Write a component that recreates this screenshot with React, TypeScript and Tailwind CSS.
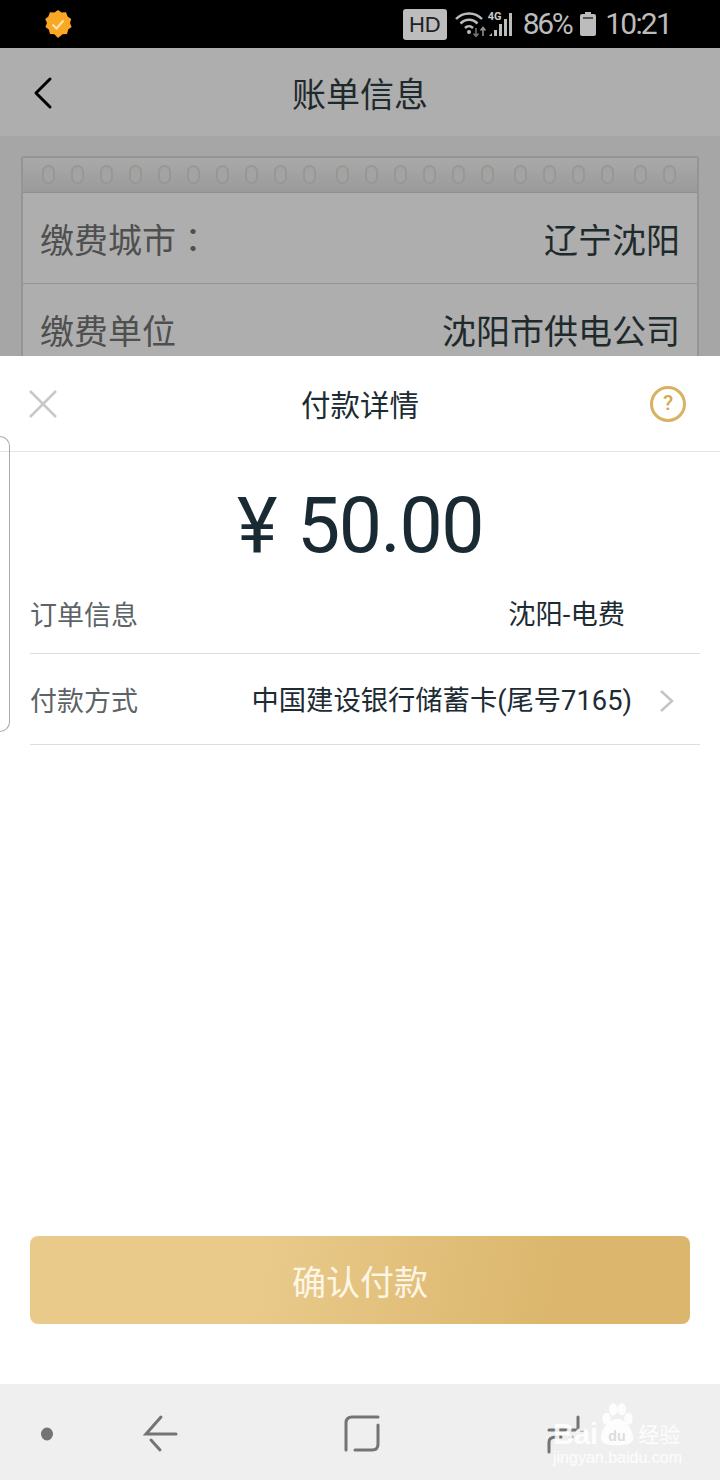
const DOT_GROUPS = [10, 6, 4, 2];

function RingDots() {
  return (
    <div className="flex h-[35px] items-center gap-[20px] border-b border-[#8f8f8f] bg-gradient-to-b from-[#a9a9a9] to-[#9a9a9a] pb-[2px] pl-[19px]">
      {DOT_GROUPS.map((count, g) => (
        <div key={g} className="flex gap-[16px]">
          {Array.from({ length: count }).map((_, i) => (
            <span key={i} className="h-[19px] w-[13px] rounded-full border-2 border-[#979795] bg-[#a3a3a1]" />
          ))}
        </div>
      ))}
    </div>
  );
}

function StatusBar() {
  return (
    <div className="flex h-12 items-center bg-black pl-[44px] pr-[49px] font-['Roboto',sans-serif] text-[#bcbcbc]">
      <svg width="28" height="28" viewBox="0 0 28 28">
        <path
          d="M14 0l3.6 2.6 4.4-.4 1.6 4.2 3.6 2.6L26 13l1.6 4-3.4 2.6-1.2 4.4-4.4.2L14 28l-3.6-3.8-4.4-.2-1.2-4.4L1.4 17 3 13 1.2 9l3.2-2.6L6 2.2l4.4.4z"
          fill="#f9a825"
        />
        <path d="M8.5 14.5l4 4 7-8" fill="none" stroke="#fde7b0" strokeWidth="2" />
      </svg>
      <div className="ml-auto flex items-center">
        <span className="flex h-[31px] w-[44px] items-center justify-center rounded-[3px] bg-[#bdbdbd] font-['Liberation_Sans',sans-serif] text-[22px] text-[#222]">
          HD
        </span>
        <svg className="ml-[8px]" width="34" height="26" viewBox="0 0 34 26" fill="none" stroke="#bcbcbc">
          <path d="M1 8c7-7.500 19-7.500 26 0" strokeWidth="2.500" />
          <path d="M5.500 12.500c5-5 12-5 17 0" strokeWidth="2.500" />
          <path d="M10 17c2.500-2.500 5.500-2.500 8 0" strokeWidth="2.500" />
          <circle cx="14" cy="21" r="2" fill="#bcbcbc" stroke="none" />
          <path d="M21 17v8M18.500 22.500l2.500 3 2.500-3" stroke="#777" strokeWidth="1.500" />
          <path d="M28 25v-8M25.500 19.500l2.500-3 2.500 3" stroke="#999" strokeWidth="1.500" />
        </svg>
        <span className="relative ml-[-1px] h-[26px] w-[26px]">
          <svg width="26" height="26" viewBox="0 0 26 26" fill="#bcbcbc">
            <path d="M1 25l3-3v3zM6 25v-6h3v6zM11 25V13h3v12zM16 25V8h3v17zM21 25V2h3v23z" />
          </svg>
          <span className="absolute left-0 top-[-1px] bg-black text-[11px] font-bold leading-[13px] text-[#ccc]">4G</span>
        </span>
        <span className="ml-[9px] text-[30px] leading-none tracking-[-2.400px]">86%</span>
        <svg className="ml-[9px]" width="16" height="24" viewBox="0 0 16 24" fill="#bcbcbc">
          <path d="M5 0h6v2h3a2 2 0 0 1 2 2v18a2 2 0 0 1-2 2H2a2 2 0 0 1-2-2V4a2 2 0 0 1 2-2h3z" />
          <path d="M3 5h10v2H3z" fill="#555" />
        </svg>
        <span className="ml-[9px] text-[30px] leading-none tracking-[-1.800px]">10:21</span>
      </div>
    </div>
  );
}

function BillBehind() {
  return (
    <div className="flex h-[308px] flex-col overflow-hidden bg-[#a6a6a6] font-['Noto_Sans_CJK_SC',sans-serif]">
      <div className="relative flex h-[88px] shrink-0 items-center justify-center bg-[#aeaeae] text-[34px] text-[#1f2a2c]">
        <svg className="absolute left-[32px] top-[28px]" width="22" height="34" viewBox="0 0 22 34" fill="none" stroke="#000" strokeWidth="3" strokeLinecap="round" strokeLinejoin="round">
          <path d="M18 3L4 17l14 14" />
        </svg>
        账单信息
      </div>
      <div className="mx-[21px] mt-[20px] flex-1 rounded-t-[3px] border-x-2 border-t-2 border-[#959595] bg-[#aeaeae]">
        <RingDots />
        <div className="flex h-[91px] items-center justify-between border-b border-[#959595] pl-[17px] pr-[17px] text-[34px]">
          <span className="text-[#4f4f4f]">
            缴费城市<span className="font-['Noto_Sans_CJK_TC',sans-serif]">：</span>
          </span>
          <span className="text-[#1f2a2c]">辽宁沈阳</span>
        </div>
        <div className="flex h-[90px] items-center justify-between pl-[17px] pr-[17px] text-[34px]">
          <span className="text-[#4f4f4f]">缴费单位</span>
          <span className="text-[#1f2a2c]">沈阳市供电公司</span>
        </div>
      </div>
    </div>
  );
}

function PaySheet() {
  return (
    <div className="relative flex flex-1 flex-col bg-white font-['Noto_Sans_CJK_SC',sans-serif]">
      <div className="grid h-[96px] grid-cols-3 items-center border-b border-[#e4e4e4] px-[29px]">
        <svg width="28" height="28" viewBox="0 0 28 28" stroke="#c8c8c8" strokeWidth="2.500">
          <path d="M1 1l26 26M27 1L1 27" />
        </svg>
        <span className="text-center text-[29.500px] text-[#1d2b33]">付款详情</span>
        <span className="mr-[5px] flex h-[36px] w-[36px] items-center justify-center justify-self-end rounded-full border-[3px] border-[#d8b25f] font-['Roboto',sans-serif] text-[21px] font-medium text-[#d3a950]">
          ?
        </span>
      </div>
      <div className="absolute left-0 top-[80px] h-[296px] w-[10px] rounded-r-[10px] border border-l-0 border-[#a8a8a8]" />
      <div className="mt-[28px] flex h-[93px] items-center justify-center gap-[21px] font-['Roboto',sans-serif] text-[77px] leading-none tracking-[-1.500px] text-[#1a2a33]">
        <span>¥</span>
        <span>50.00</span>
      </div>
      <div className="ml-[30px] mr-[20px] flex h-[81px] items-center border-b border-[#dedede] pr-[75px] pt-[4px]">
        <span className="-mt-[2px] text-[27px] text-[#5d6467]">订单信息</span>
        <span className="ml-auto font-['Roboto','Noto_Sans_CJK_SC',sans-serif] text-[27.300px] text-[#1d2b33]">沈阳-电费</span>
      </div>
      <div className="ml-[30px] mr-[20px] flex h-[91px] items-center border-b border-[#dedede] pr-[25px] pt-[4px]">
        <span className="-mt-[2px] text-[27px] text-[#5d6467]">付款方式</span>
        <span className="ml-auto font-['Roboto','Noto_Sans_CJK_SC',sans-serif] text-[27.300px] text-[#1d2b33]">中国建设银行储蓄卡(尾号7165)</span>
        <svg className="ml-[27px]" width="16" height="24" viewBox="0 0 16 24" fill="none" stroke="#c4c4c4" strokeWidth="2.500">
          <path d="M2 2l11 10L2 22" />
        </svg>
      </div>
      <div className="mx-[30px] mb-[60px] mt-auto flex h-[88px] items-center justify-center rounded-[8px] bg-[linear-gradient(100deg,#e9ca8b_35%,#dbb66c_80%)] text-[34px] text-[#fdf6e6]">
        确认付款
      </div>
    </div>
  );
}

function NavBar() {
  return (
    <div className="relative flex h-[96px] items-center bg-[#efefef]">
      <svg className="h-[96px] w-[620px]" viewBox="0 0 620 96" fill="none" stroke="#747474" strokeWidth="3" strokeLinecap="round">
        <ellipse cx="47" cy="50" rx="6" ry="6.500" fill="#747474" stroke="none" />
        <path d="M161 33L146 50h30M151 56l9 10" />
        <path d="M378 33h-26q-6 0-6 6v27M378 41v19q0 6-6 6h-17" />
        <path d="M578 33v13M549 46h34M549 68V58q0-5 7-5h5M570 53h2" />
      </svg>
      <div className="absolute left-[553px] top-[18px] flex flex-col items-start font-['Liberation_Sans',sans-serif] text-white/85">
        <div className="flex h-[45px] items-end text-[29px] font-bold leading-[25px]">
          <span>Bai</span>
          <svg className="ml-[1px]" width="36" height="45" viewBox="0 0 38 46" fill="#fff" fillOpacity="0.85">
            <ellipse cx="8" cy="17" rx="4.500" ry="6.500" />
            <ellipse cx="15" cy="7" rx="4.500" ry="6.500" />
            <ellipse cx="24" cy="7" rx="4.500" ry="6.500" />
            <ellipse cx="31" cy="17" rx="4.500" ry="6.500" />
            <path d="M19 17c-8 0-17 12-17 20 0 6 6 8 17 8s17-2 17-8c0-8-9-20-17-20z" />
            <text x="19" y="40" fontSize="15" fill="#d6d6d6" textAnchor="middle">du</text>
          </svg>
          <span className="ml-[3px] font-['Noto_Sans_CJK_SC',sans-serif] text-[21px] font-normal leading-[28px]">经验</span>
        </div>
        <span className="mt-[2px] text-[16px] leading-[18px]">jingyan.baidu.com</span>
      </div>
    </div>
  );
}

export default function App() {
  return (
    <div className="flex h-[1480px] w-[720px] flex-col overflow-hidden">
      <StatusBar />
      <BillBehind />
      <PaySheet />
      <NavBar />
    </div>
  );
}
